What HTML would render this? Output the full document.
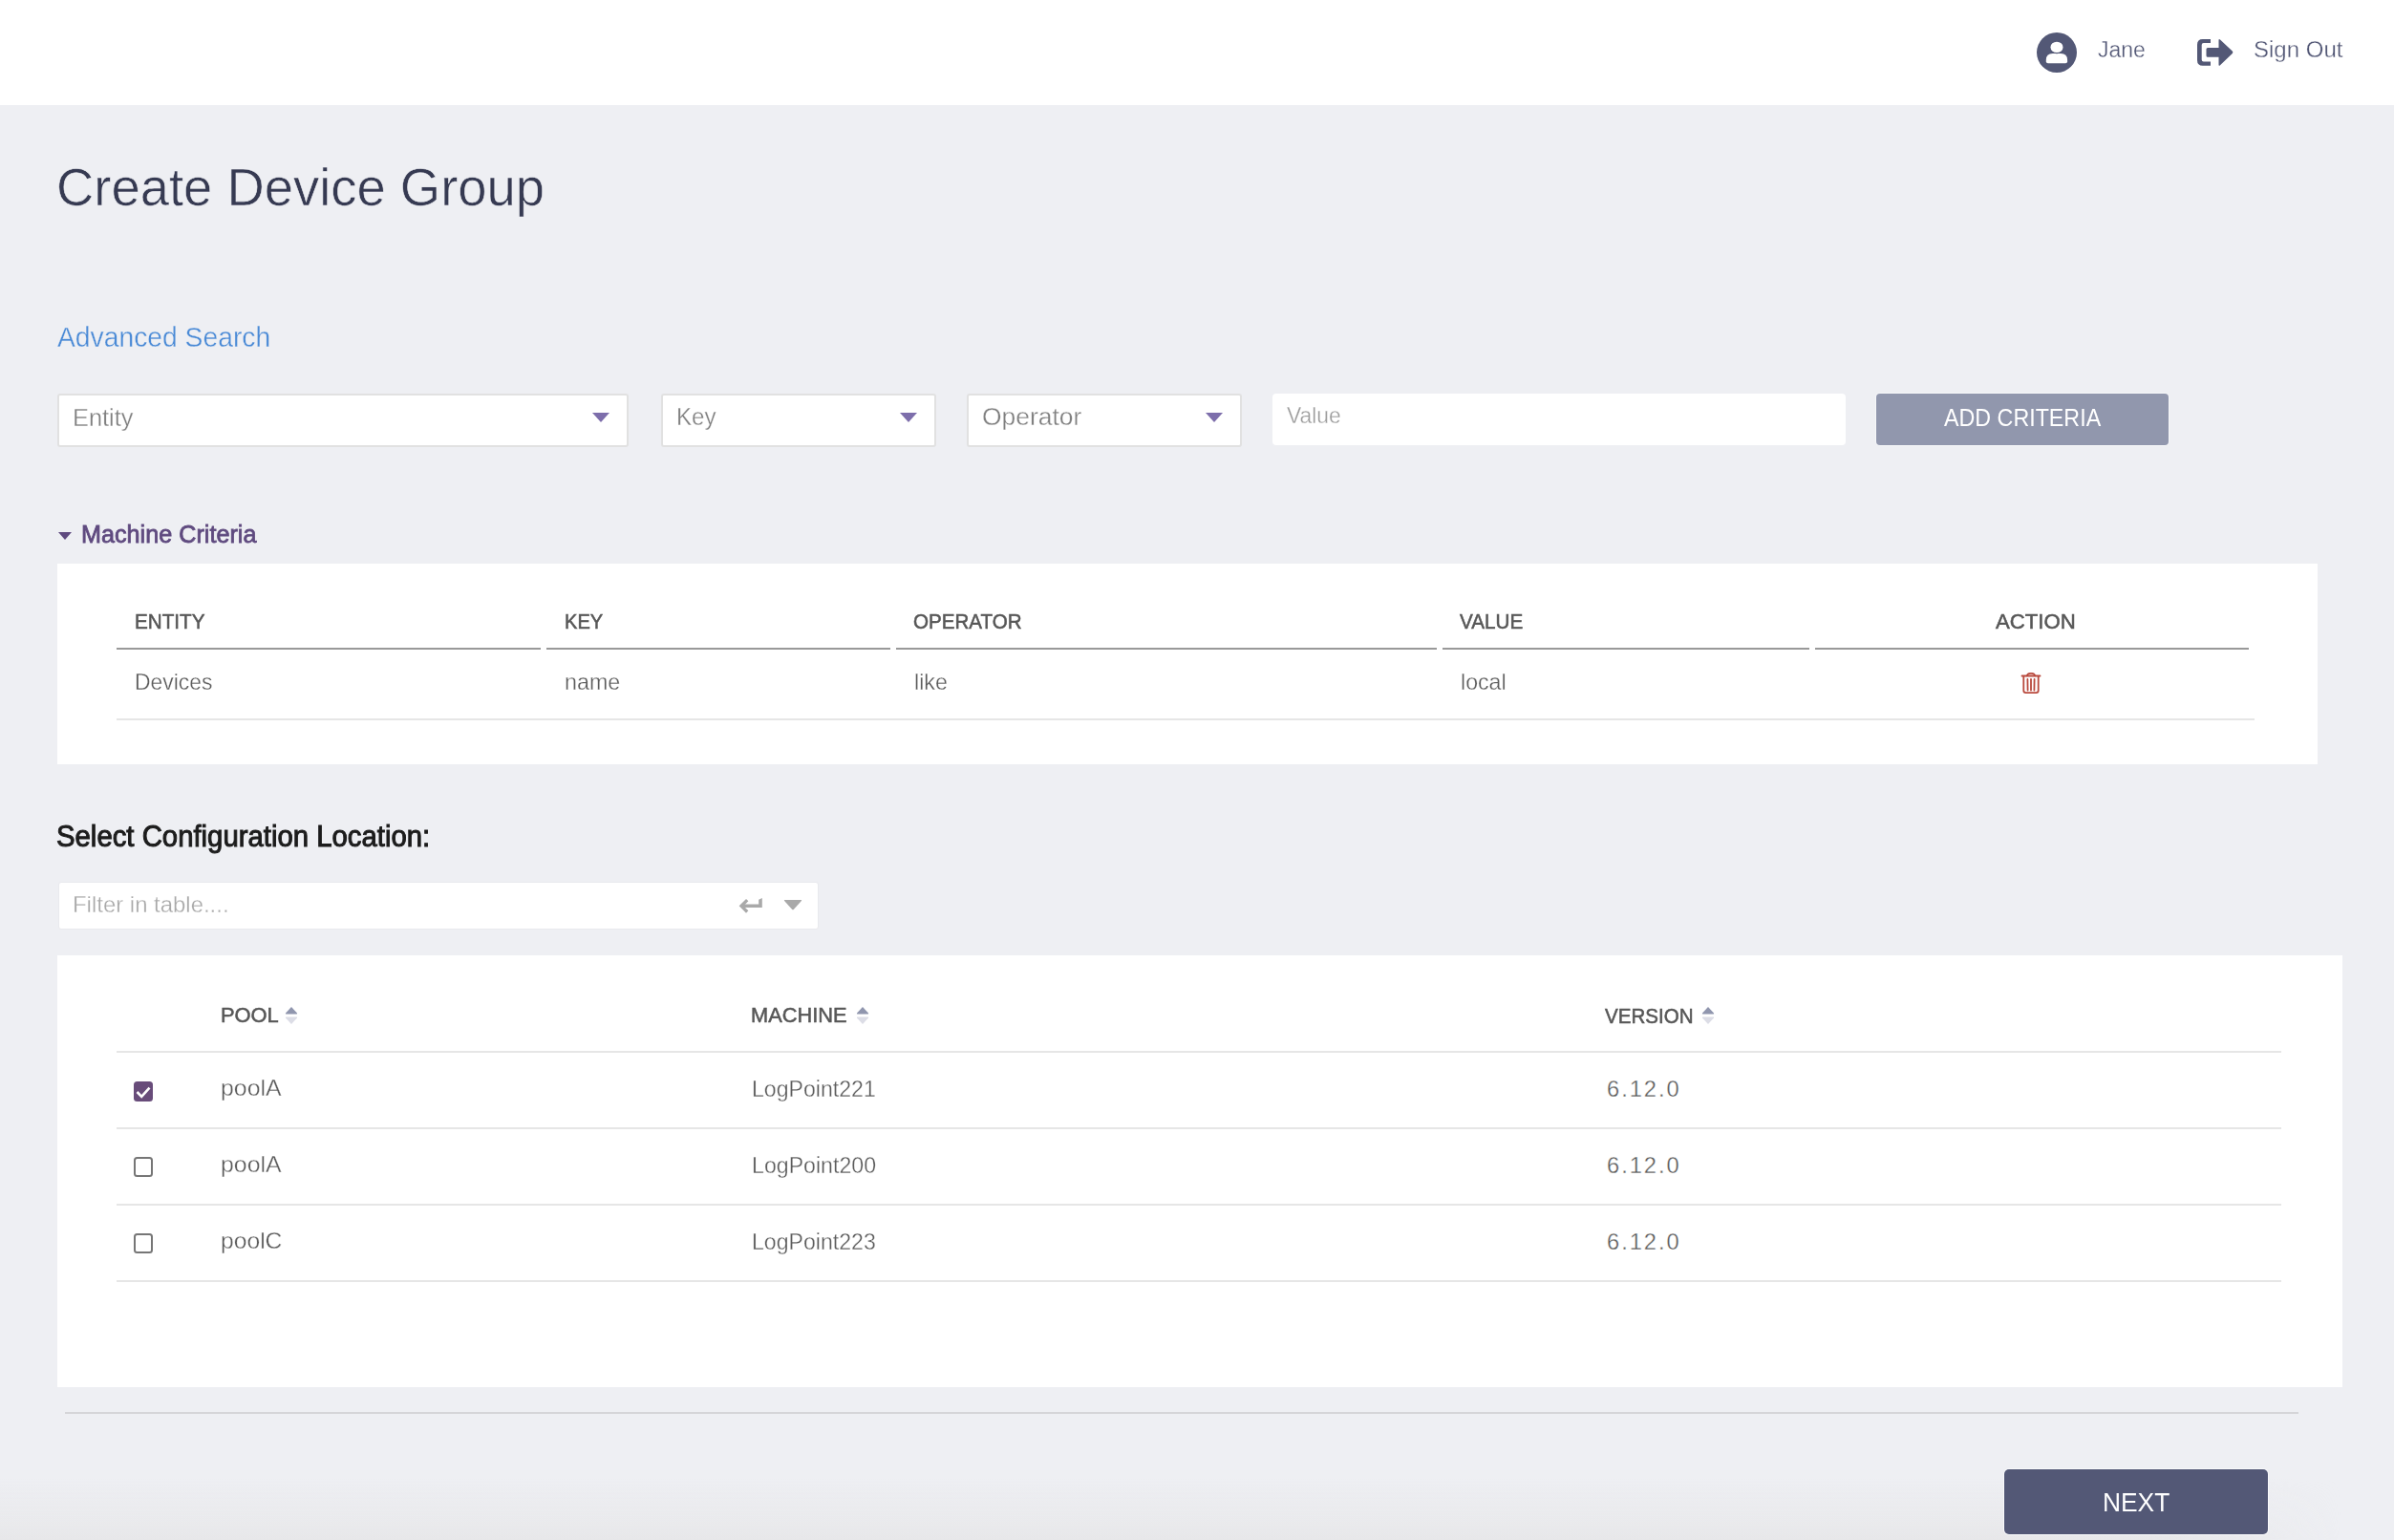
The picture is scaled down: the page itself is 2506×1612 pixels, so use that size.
<!DOCTYPE html>
<html><head><meta charset='utf-8'><title>Create Device Group</title>
<style>
*{margin:0;padding:0;box-sizing:border-box}
html,body{width:2506px;height:1612px;overflow:hidden}
body{background:#eeeff3;font-family:"Liberation Sans",sans-serif;position:relative}
.t{position:absolute;white-space:nowrap;transform-origin:0 0;font-family:"Liberation Sans",sans-serif}
.a{position:absolute}
#hdr{left:0;top:0;width:2506px;height:110px;background:#fff}
.sel{background:#fff;border:2px solid #e1e1e1;border-radius:3px}
.tri{width:0;height:0;border-left:9px solid transparent;border-right:9px solid transparent;border-top:10px solid #7d6eab}
.panel{background:#fff}
.hl{height:2px;background:#999}
.rl{height:2px;background:#e6e6e6}
#bottomfade{left:0;top:1548px;width:2506px;height:64px;background:linear-gradient(to bottom,rgba(231,231,233,0),rgba(231,231,233,0.55) 60%,rgba(231,231,233,1));-webkit-mask-image:linear-gradient(to right,#000 0,#000 2250px,transparent 2450px)}
</style></head>
<body>

<div id=hdr class=a></div>
<!-- user icon -->
<svg class=a style='left:2132px;top:34px' width=42 height=42 viewBox='0 0 42 42'>
 <circle cx=21 cy=21 r=21 fill='#535876'/>
 <path d='M9.8 30.2 L9.8 28.8 Q9.8 21.9 16.7 21.9 L25.2 21.9 Q32.1 21.9 32.1 28.8 L32.1 30.2 Q32.1 32.2 30.1 32.2 L11.8 32.2 Q9.8 32.2 9.8 30.2 Z' fill='#fff'/>
 <ellipse cx=21 cy=15.4 rx=7.7 ry=6.9 fill='#535876'/>
 <ellipse cx=21 cy=15.4 rx=6.5 ry=5.7 fill='#fff'/>
</svg>
<!-- sign out icon -->
<svg class=a style='left:2300px;top:40px' width=40 height=30 viewBox='0 0 40 30'>
 <path d='M14 0.9 L5.8 0.9 Q0 0.9 0 6.7 L0 23 Q0 28.8 5.8 28.8 L14 28.8 L14 24.6 L6.7 24.6 Q4.7 24.6 4.7 22.6 L4.7 7.1 Q4.7 5.1 6.7 5.1 L14 5.1 Z' fill='#535876'/>
 <path d='M11 10 L22.5 10 L22.5 2.2 Q22.5 0.2 24 1.5 L36.8 13.6 Q38 14.8 36.8 16 L24 28.2 Q22.5 29.5 22.5 27.5 L22.5 19.7 L11 19.7 Q9.5 19.7 9.5 18.2 L9.5 11.5 Q9.5 10 11 10 Z' fill='#535876'/>
</svg>

<!-- selects -->
<div class='a sel' style='left:60px;top:412px;width:598px;height:56px'></div>
<div class='a tri' style='left:620px;top:432px'></div>
<div class='a sel' style='left:692px;top:412px;width:288px;height:56px'></div>
<div class='a tri' style='left:942px;top:432px'></div>
<div class='a sel' style='left:1012px;top:412px;width:288px;height:56px'></div>
<div class='a tri' style='left:1262px;top:432px'></div>
<div class='a' style='left:1332px;top:412px;width:600px;height:54px;background:#fff;border-radius:4px'></div>
<div class='a' style='left:1964px;top:412px;width:306px;height:54px;background:#9197ad;border-radius:4px;box-shadow:0 0 0 1px #f6f7f9'></div>

<!-- machine criteria -->
<div class=a style='left:61px;top:557px;width:0;height:0;border-left:7px solid transparent;border-right:7px solid transparent;border-top:8px solid #5f4a7f'></div>
<div class='a panel' style='left:60px;top:590px;width:2366px;height:210px'></div>
<div class='a hl' style='left:122px;top:678px;width:444px'></div>
<div class='a hl' style='left:572px;top:678px;width:360px'></div>
<div class='a hl' style='left:938px;top:678px;width:566px'></div>
<div class='a hl' style='left:1510px;top:678px;width:384px'></div>
<div class='a hl' style='left:1900px;top:678px;width:454px'></div>
<div class='a rl' style='left:122px;top:752px;width:2238px'></div>
<!-- trash -->
<svg class=a style='left:2114px;top:702px' width=24 height=26 viewBox='0 0 24 26'>
 <g fill='none' stroke='#b94a3e' stroke-width='1.8' stroke-linecap='round'>
  <path d='M2.5 5.5 L21.5 5.5'/>
  <path d='M7.8 5.3 Q8.6 2.8 11 2.8 L13 2.8 Q15.4 2.8 16.2 5.3'/>
  <path d='M4.3 6 L4.3 20.8 Q4.3 23.1 6.6 23.1 L17.4 23.1 Q19.7 23.1 19.7 20.8 L19.7 6'/>
  <path d='M8.4 9 L8.6 20.5 M12 9 L12 20.5 M15.6 9 L15.4 20.5'/>
 </g>
</svg>

<!-- filter -->
<div class=a style='left:61px;top:923px;width:796px;height:50px;background:#fff;border:1px solid #e8e9ed;border-radius:3px'></div>
<svg class=a style='left:772px;top:938px' width=28 height=20 viewBox='0 0 28 20'>
 <path d='M5 8.6 L22.2 8.6 L22.2 3.7 L25.8 1.9 L25.8 12 L5 12 Z' fill='#a9a9a9'/>
 <path d='M10.2 4.1 L4 10.3 L10.2 16.5' fill='none' stroke='#a9a9a9' stroke-width='3.3' stroke-linecap='butt' stroke-linejoin='miter'/>
</svg>
<svg class=a style='left:820px;top:941px' width=20 height=12 viewBox='0 0 20 12'>
 <path d='M1.5 1 L18.5 1 Q19.8 1 18.9 2 L10.8 10.9 Q10 11.7 9.2 10.9 L1.1 2 Q0.2 1 1.5 1 Z' fill='#a9a9a9'/>
</svg>

<!-- config table -->
<div class='a panel' style='left:60px;top:1000px;width:2392px;height:452px'></div>
<svg class=a style='left:298px;top:1053px' width=14 height=20 viewBox='0 0 14 20'>
 <path d='M7 1 L13 7.5 Q13.5 8.5 12.5 8.5 L1.5 8.5 Q0.5 8.5 1 7.5 Z' fill='#9096ae'/>
 <path d='M7 19 L13 12.5 Q13.5 11.5 12.5 11.5 L1.5 11.5 Q0.5 11.5 1 12.5 Z' fill='#dcdde6'/>
</svg>
<svg class=a style='left:896px;top:1053px' width=14 height=20 viewBox='0 0 14 20'>
 <path d='M7 1 L13 7.5 Q13.5 8.5 12.5 8.5 L1.5 8.5 Q0.5 8.5 1 7.5 Z' fill='#9096ae'/>
 <path d='M7 19 L13 12.5 Q13.5 11.5 12.5 11.5 L1.5 11.5 Q0.5 11.5 1 12.5 Z' fill='#dcdde6'/>
</svg>
<svg class=a style='left:1781px;top:1053px' width=14 height=20 viewBox='0 0 14 20'>
 <path d='M7 1 L13 7.5 Q13.5 8.5 12.5 8.5 L1.5 8.5 Q0.5 8.5 1 7.5 Z' fill='#9096ae'/>
 <path d='M7 19 L13 12.5 Q13.5 11.5 12.5 11.5 L1.5 11.5 Q0.5 11.5 1 12.5 Z' fill='#dcdde6'/>
</svg>
<div class='a rl' style='left:122px;top:1100px;width:2266px'></div>
<div class='a rl' style='left:122px;top:1180px;width:2266px'></div>
<div class='a rl' style='left:122px;top:1260px;width:2266px'></div>
<div class='a rl' style='left:122px;top:1340px;width:2266px'></div>
<!-- checkboxes -->
<svg class=a style='left:140px;top:1132px' width=20 height=21 viewBox='0 0 20 21'>
 <rect x=0 y=0 width=20 height=21 rx=3.5 fill='#684c7a'/>
 <path d='M3.5 11 L8.2 15.8 L16.5 6.6' fill='none' stroke='#fff' stroke-width='2.6'/>
</svg>
<div class=a style='left:140px;top:1211px;width:20px;height:21px;border:2px solid #767676;border-radius:3.5px'></div>
<div class=a style='left:140px;top:1291px;width:20px;height:21px;border:2px solid #767676;border-radius:3.5px'></div>

<!-- footer -->
<div class=a style='left:68px;top:1478px;width:2338px;height:2px;background:#d5d5d8'></div>
<div id=bottomfade class=a></div>
<div class=a style='left:2098px;top:1538px;width:276px;height:68px;background:#535876;border-radius:5px;box-shadow:0 0 0 1px #f8f9fb'></div>

<div class=t style='left:2196.24px;top:39.53px;font-size:24.42px;line-height:24.42px;font-weight:400;color:#535876;transform:scaleX(0.9419);-webkit-text-stroke:0.3px #fff;'>Jane</div>
<div class=t style='left:2358.8px;top:39.53px;font-size:24.42px;line-height:24.42px;font-weight:400;color:#535876;transform:scaleX(0.9837);-webkit-text-stroke:0.3px #fff;'>Sign Out</div>
<div class=t style='left:59.18px;top:168.31px;font-size:56.1px;line-height:56.1px;font-weight:400;color:#363a52;transform:scaleX(0.97);-webkit-text-stroke:0.6px #eeeff3;'>Create Device Group</div>
<div class=t style='left:59.9px;top:336.59px;font-size:30.38px;line-height:30.38px;font-weight:400;color:#4a8ad6;transform:scaleX(0.9308);-webkit-text-stroke:0.35px #eeeff3;'>Advanced Search</div>
<div class=t style='left:76.27px;top:423.85px;font-size:26.16px;line-height:26.16px;font-weight:400;color:#808080;transform:scaleX(0.9682);-webkit-text-stroke:0.3px #fff;'>Entity</div>
<div class=t style='left:708.07px;top:423.92px;font-size:25.73px;line-height:25.73px;font-weight:400;color:#808080;transform:scaleX(0.9362);-webkit-text-stroke:0.3px #fff;'>Key</div>
<div class=t style='left:1028.18px;top:423.95px;font-size:25.58px;line-height:25.58px;font-weight:400;color:#808080;transform:scaleX(1.0327);-webkit-text-stroke:0.3px #fff;'>Operator</div>
<div class=t style='left:1346.62px;top:423.15px;font-size:24.27px;line-height:24.27px;font-weight:400;color:#9d9d9d;transform:scaleX(0.9401);-webkit-text-stroke:0.3px #fff;'>Value</div>
<div class=t style='left:2035.0px;top:424.67px;font-size:25.44px;line-height:25.44px;font-weight:400;color:#ffffff;transform:scaleX(0.9145);'>ADD CRITERIA</div>
<div class=t style='left:84.88px;top:547.06px;font-size:25.8px;line-height:25.8px;font-weight:400;color:#5f4a7f;transform:scaleX(0.9766);-webkit-text-stroke:0.8px currentColor;'>Machine Criteria</div>
<div class=t style='left:140.65px;top:640.1px;font-size:22.09px;line-height:22.09px;font-weight:400;color:#575757;transform:scaleX(0.9354);-webkit-text-stroke:0.55px currentColor;'>ENTITY</div>
<div class=t style='left:590.59px;top:640.1px;font-size:22.09px;line-height:22.09px;font-weight:400;color:#575757;transform:scaleX(0.91);-webkit-text-stroke:0.55px currentColor;'>KEY</div>
<div class=t style='left:956.27px;top:640.1px;font-size:22.09px;line-height:22.09px;font-weight:400;color:#575757;transform:scaleX(0.9328);-webkit-text-stroke:0.55px currentColor;'>OPERATOR</div>
<div class=t style='left:1528.09px;top:640.1px;font-size:22.09px;line-height:22.09px;font-weight:400;color:#575757;transform:scaleX(0.9354);-webkit-text-stroke:0.55px currentColor;'>VALUE</div>
<div class=t style='left:2088.8px;top:640.0px;font-size:22.09px;line-height:22.09px;font-weight:400;color:#575757;transform:scaleX(1.0037);-webkit-text-stroke:0.55px currentColor;'>ACTION</div>
<div class=t style='left:140.87px;top:701.52px;font-size:23.84px;line-height:23.84px;font-weight:400;color:#5c5c5c;transform:scaleX(0.9598);-webkit-text-stroke:0.3px #fff;'>Devices</div>
<div class=t style='left:590.57px;top:701.52px;font-size:23.84px;line-height:23.84px;font-weight:400;color:#5c5c5c;transform:scaleX(0.9777);-webkit-text-stroke:0.3px #fff;'>name</div>
<div class=t style='left:957.17px;top:701.52px;font-size:23.84px;line-height:23.84px;font-weight:400;color:#5c5c5c;transform:scaleX(0.9779);-webkit-text-stroke:0.3px #fff;'>like</div>
<div class=t style='left:1529.38px;top:701.52px;font-size:23.84px;line-height:23.84px;font-weight:400;color:#5c5c5c;transform:scaleX(0.9723);-webkit-text-stroke:0.3px #fff;'>local</div>
<div class=t style='left:58.93px;top:860.92px;font-size:30.81px;line-height:30.81px;font-weight:400;color:#1c1c1c;transform:scaleX(0.9522);-webkit-text-stroke:1px currentColor;'>Select Configuration Location:</div>
<div class=t style='left:76.29px;top:935.35px;font-size:24.27px;line-height:24.27px;font-weight:400;color:#a9a9a9;transform:scaleX(0.986);-webkit-text-stroke:0.3px #fff;'>Filter in table....</div>
<div class=t style='left:230.55px;top:1051.83px;font-size:22.53px;line-height:22.53px;font-weight:400;color:#575757;transform:scaleX(0.9709);-webkit-text-stroke:0.55px currentColor;'>POOL</div>
<div class=t style='left:786.45px;top:1051.93px;font-size:22.53px;line-height:22.53px;font-weight:400;color:#575757;transform:scaleX(0.9688);-webkit-text-stroke:0.55px currentColor;'>MACHINE</div>
<div class=t style='left:1679.99px;top:1051.81px;font-size:22.67px;line-height:22.67px;font-weight:400;color:#575757;transform:scaleX(0.9071);-webkit-text-stroke:0.55px currentColor;'>VERSION</div>
<div class=t style='left:230.81px;top:1127.54px;font-size:23.69px;line-height:23.69px;font-weight:400;color:#5c5c5c;transform:scaleX(1.0493);-webkit-text-stroke:0.3px #fff;'>poolA</div>
<div class=t style='left:786.75px;top:1127.53px;font-size:24.42px;line-height:24.42px;font-weight:400;color:#5c5c5c;transform:scaleX(0.9466);-webkit-text-stroke:0.3px #fff;'>LogPoint221</div>
<div class=t style='left:1682.01px;top:1128.54px;font-size:23.69px;line-height:23.69px;font-weight:400;color:#5c5c5c;letter-spacing:1.97px;-webkit-text-stroke:0.3px #fff;'>6.12.0</div>
<div class=t style='left:230.81px;top:1207.54px;font-size:23.69px;line-height:23.69px;font-weight:400;color:#5c5c5c;transform:scaleX(1.0493);-webkit-text-stroke:0.3px #fff;'>poolA</div>
<div class=t style='left:786.75px;top:1207.53px;font-size:24.42px;line-height:24.42px;font-weight:400;color:#5c5c5c;transform:scaleX(0.9486);-webkit-text-stroke:0.3px #fff;'>LogPoint200</div>
<div class=t style='left:1682.01px;top:1208.54px;font-size:23.69px;line-height:23.69px;font-weight:400;color:#5c5c5c;letter-spacing:1.97px;-webkit-text-stroke:0.3px #fff;'>6.12.0</div>
<div class=t style='left:230.82px;top:1287.54px;font-size:23.69px;line-height:23.69px;font-weight:400;color:#5c5c5c;transform:scaleX(1.0409);-webkit-text-stroke:0.3px #fff;'>poolC</div>
<div class=t style='left:786.75px;top:1287.53px;font-size:24.42px;line-height:24.42px;font-weight:400;color:#5c5c5c;transform:scaleX(0.9466);-webkit-text-stroke:0.3px #fff;'>LogPoint223</div>
<div class=t style='left:1682.01px;top:1288.54px;font-size:23.69px;line-height:23.69px;font-weight:400;color:#5c5c5c;letter-spacing:1.97px;-webkit-text-stroke:0.3px #fff;'>6.12.0</div>
<div class=t style='left:2200.59px;top:1558.5px;font-size:27.76px;line-height:27.76px;font-weight:400;color:#ffffff;transform:scaleX(0.9498);'>NEXT</div>
</body></html>
